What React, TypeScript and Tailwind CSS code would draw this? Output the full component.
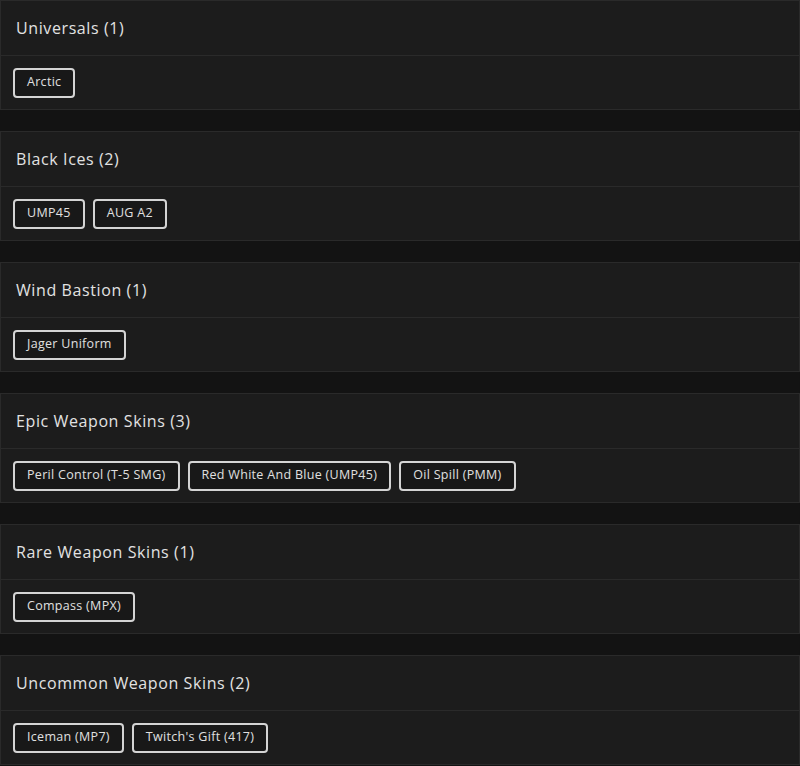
const GROUPS: { title: string; items: string[] }[] = [
  { title: "Universals", items: ["Arctic"] },
  { title: "Black Ices", items: ["UMP45", "AUG A2"] },
  { title: "Wind Bastion", items: ["Jager Uniform"] },
  {
    title: "Epic Weapon Skins",
    items: ["Peril Control (T-5 SMG)", "Red White And Blue (UMP45)", "Oil Spill (PMM)"],
  },
  { title: "Rare Weapon Skins", items: ["Compass (MPX)"] },
  { title: "Uncommon Weapon Skins", items: ["Iceman (MP7)", "Twitch's Gift (417)"] },
];

export default function App() {
  return (
    <div
      className="min-h-[766px] w-[800px] bg-[#131313] flex flex-col gap-[21px]"
      style={{ fontFamily: '"Open Sans", "Liberation Sans", sans-serif' }}
    >
      {GROUPS.map((g) => (
        <section
          key={g.title}
          className="bg-[#1c1c1c] border border-[#2a2a2a] h-[110px] flex flex-col"
        >
          <div className="h-[55px] px-[15px] flex items-center border-b border-[#2a2a2a]">
            <h2 className="text-[16px] tracking-[0.6px] font-medium text-[#e2e2e2]">
              {g.title} ({g.items.length})
            </h2>
          </div>
          <div className="flex-1 px-[12px] flex items-center gap-[8px]">
            {g.items.map((it) => (
              <span
                key={it}
                className="h-[30px] px-[12px] flex items-center rounded-[4px] border-2 border-[#d4d4d4] bg-[#181818] text-[12.5px] tracking-[0.3px] text-[#e0e0e0]"
              >
                {it}
              </span>
            ))}
          </div>
        </section>
      ))}
    </div>
  );
}
